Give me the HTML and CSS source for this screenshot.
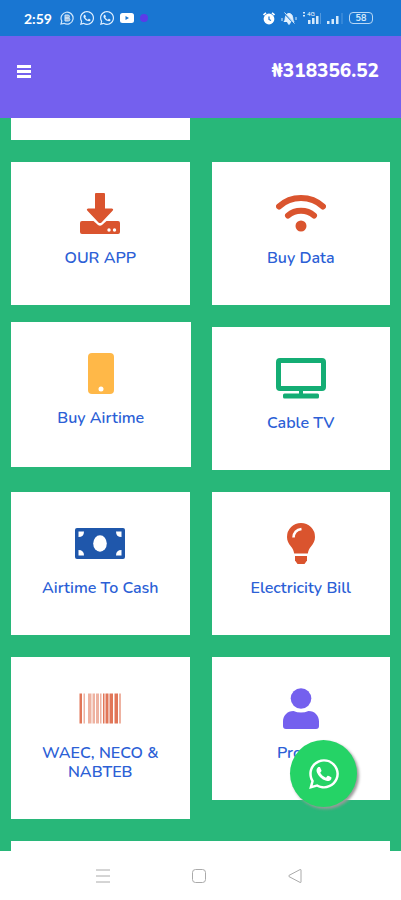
FILE: index.html
```html
<!DOCTYPE html>
<html lang="en">
<head>
    <meta charset="UTF-8">
    <meta name="viewport" content="width=device-width, initial-scale=1.0">
    <title>Dashboard</title>
    <link rel="stylesheet" href="styles.css">
</head>
<body>
    <svg class="defs" aria-hidden="true">
        <symbol id="whatsapp" viewBox="0 0 448 512">
            <path d="M380.9 97.1C339 55.1 283.2 32 223.9 32c-122.4 0-222 99.6-222 222 0 39.1 10.2 77.3 29.6 111L0 480l117.7-30.9c32.4 17.7 68.9 27 106.1 27h.1c122.3 0 224.1-99.6 224.1-222 0-59.3-25.2-115-67.1-157zm-157 341.6c-33.2 0-65.7-8.9-94-25.7l-6.7-4-69.8 18.3L72 359.2l-4.4-7c-18.5-29.4-28.2-63.3-28.2-98.2 0-101.7 82.8-184.5 184.6-184.5 49.3 0 95.6 19.2 130.4 54.1 34.8 34.9 56.2 81.2 56.1 130.5 0 101.8-84.9 184.6-186.6 184.6zm101.2-138.2c-5.5-2.8-32.8-16.2-37.9-18-5.1-1.9-8.8-2.8-12.5 2.8-3.7 5.6-14.3 18-17.6 21.8-3.2 3.7-6.5 4.2-12 1.4-32.6-16.3-54-29.1-75.5-66-5.7-9.8 5.7-9.1 16.3-30.3 1.8-3.7.9-6.9-.5-9.7-1.4-2.8-12.5-30.1-17.1-41.2-4.5-10.8-9.1-9.3-12.5-9.5-3.2-.2-6.9-.2-10.6-.2-3.7 0-9.7 1.4-14.8 6.9-5.1 5.6-19.4 19-19.4 46.3 0 27.3 19.9 53.7 22.6 57.4 2.8 3.7 39.1 59.7 94.8 83.8 35.2 15.2 49 16.5 66.6 13.9 10.7-1.6 32.8-13.4 37.4-26.4 4.6-13 4.6-24.1 3.2-26.4-1.3-2.5-5-3.9-10.5-6.6z"/>
        </symbol>
    </svg>

    <div class="statusbar">
        <div class="status-left">
            <span class="clock">2:59</span>
            <svg width="14" height="14" viewBox="0 0 14 14">
                <path d="M1 13l.8-3A6 6 0 1 1 4 12.3z" fill="none" stroke="#cfe6fb" stroke-width="1.2"/>
                <path d="M5 4h3a1.4 1.4 0 0 1 0 3H5zM5 7h3.400a1.500 1.500 0 0 1 0 3H5z" fill="#9fb9d6" stroke="#cfe6fb"/>
            </svg>
            <svg width="14" height="16" fill="#e2f1ff"><use href="#whatsapp"/></svg>
            <svg width="14" height="16" fill="#e2f1ff"><use href="#whatsapp"/></svg>
            <svg width="14" height="10" viewBox="0 0 14 10">
                <rect width="14" height="10" rx="2.500" fill="#fff"/>
                <path d="M5.500 3v4l3.500-2z" fill="#1976d2"/>
            </svg>
            <span class="dot"></span>
        </div>
        <div class="status-right">
            <svg width="12" height="13" viewBox="0 0 12 13">
                <path d="M.5 3L3 .8M11.500 3L9 .8" stroke="#fff" stroke-width="1.6"/>
                <circle cx="6" cy="7" r="5.400" fill="#fff"/>
                <path d="M6 4.500V7.500l2 1" fill="none" stroke="#1976d2" stroke-width="1.200"/>
            </svg>
            <svg width="16" height="13" viewBox="0 0 16 13">
                <path d="M3 9.500c1.500-1 1-3.500 1.500-5C5 2.500 6.500 1.500 8 1.500s3 1 3.500 3c.5 1.500 0 4 1.500 5zM6.500 10.500h3L8 12.500z" fill="#e2f1ff" stroke="#e2f1ff"/>
                <path d="M3 1l10.500 11" stroke="#1976d2" stroke-width="1.200"/>
                <path d="M1 6v3M15 5v3M3.500.5l10 11" stroke="#d5e9fb"/>
            </svg>
            <span class="network">
                <small>4G</small>
                <svg width="18" height="12" viewBox="0 0 18 12" fill="#d5e9fb">
                    <path d="M0 0h2v1.500H0zM0 3h2v1.500H0zM5 8h2.500v4H5zM9 6h2.500v6H9zM13 4h2.500v8H13z"/>
                    <path d="M17 1h1v11h-1z" opacity=".3"/>
                </svg>
            </span>
            <svg width="16" height="12" viewBox="0 0 16 12" fill="#d5e9fb">
                <path d="M0 9h2.500v3H0zM4.500 7H7v5H4.500zM9 4h2.500v8H9z"/>
                <path d="M14.500 1h1v11h-1z" opacity=".3"/>
            </svg>
            <span class="battery">58</span>
        </div>
    </div>

    <header class="topbar">
        <button class="menu" aria-label="Menu"><span></span><span></span><span></span></button>
        <span class="balance">₦318356.52</span>
    </header>

    <main class="content">
        <div class="grid">
            <div class="card card-scrolled"></div>

            <a href="#" class="card first">
                <svg class="icon orange" viewBox="0 0 50 42">
                    <path d="M21 0h8a1 1 0 0 1 1 1v14.500h7q2 .5.800 2L26.500 29.500q-1.500 1.200-3 0L12.200 17.500q-1.200-1.500.8-2h7V1a1 1 0 0 1 1-1z"/>
                    <path d="M7 28h11.500l4.500 4q2 1.600 4 0l4.500-4H43q2 0 2 2v9q0 2-2 2H7q-2 0-2-2v-9q0-2 2-2z"/>
                    <circle cx="34" cy="37" r="1.700" fill="#fff"/>
                    <circle cx="39.500" cy="37" r="1.700" fill="#fff"/>
                </svg>
                <span>OUR APP</span>
            </a>
            <a href="#" class="card">
                <svg class="icon orange-line" viewBox="0 0 50 42">
                    <path d="M3 13.500Q12 5 25 5t22 8.500M12 22.500q5.500-4.700 13-4.700T38 22.500"/>
                    <circle cx="25" cy="33" r="2.500"/>
                </svg>
                <span>Buy Data</span>
            </a>
            <a href="#" class="card raised">
                <svg class="icon amber" viewBox="0 0 50 42">
                    <rect x="12" width="26" height="41" rx="4"/>
                    <circle cx="25" cy="36" r="2.500" fill="#fff"/>
                </svg>
                <span>Buy Airtime</span>
            </a>
            <a href="#" class="card">
                <svg class="icon green" viewBox="0 0 50 42">
                    <path fill-rule="evenodd" d="M4 0h42q4 0 4 4v25q0 4-4 4H4q-4 0-4-4V4q0-4 4-4zm1 5v23h40V5z"/>
                    <path d="M23 32h4v4h-4z"/>
                    <rect x="7" y="35.500" width="36" height="5" rx="1.500"/>
                </svg>
                <span>Cable TV</span>
            </a>
            <a href="#" class="card">
                <svg class="icon navy" viewBox="0 0 50 42">
                    <rect y="5" width="50" height="31" rx="2"/>
                    <g fill="#fff">
                        <ellipse cx="25" cy="20.500" rx="6.800" ry="8.200"/>
                        <path d="M3.500 8.500H9q0 5.500-5.500 5.500zM46.500 8.500H41q0 5.500 5.500 5.500zM3.500 32.500H9q0-5.500-5.500-5.500zM46.500 32.500H41q0-5.500 5.500-5.500z"/>
                    </g>
                </svg>
                <span>Airtime To Cash</span>
            </a>
            <a href="#" class="card">
                <svg class="icon orange" viewBox="0 0 50 42">
                    <path d="M25 0a14 14 0 0 1 14 14c0 4-1.600 6.600-3.800 9.200-2 2.400-3 4.800-3.400 7.300H18.200c-.4-2.500-1.400-4.900-3.400-7.300C12.600 20.600 11 18 11 14A14 14 0 0 1 25 0z"/>
                    <path d="M19 33h12v4.500L28.500 41h-7L19 37.500z"/>
                    <path d="M17.500 14.500q.5-7.500 8-8.500" fill="none" stroke="#fff" stroke-width="2.600"/>
                </svg>
                <span>Electricity Bill</span>
            </a>
            <a href="#" class="card">
                <svg class="icon orange" viewBox="0 0 50 42">
                    <path d="M4.500 5.500h2.500v30H4.500zM28 5.500h1.500v30H28zM30.500 5.500h3v30h-3zM34.500 5.500h3.500v30h-3.500zM39.500 5.500h3.500v30h-3.500z" opacity=".8"/>
                    <path d="M8.500 5.500h1.500v30H8.500zM13 5.500h3.500v30H13zM17.500 5.500h2.500v30h-2.500zM21 5.500h3v30h-3zM25 5.500h1.500v30H25zM44 5.500h2v30h-2z" opacity=".45"/>
                </svg>
                <span>WAEC, NECO &amp; NABTEB</span>
            </a>
            <a href="#" class="card">
                <svg class="icon violet" viewBox="0 0 50 42">
                    <circle cx="25" cy="10.500" r="10.300"/>
                    <path d="M17.500 23q7.500 3 15 0C39 23 43 28 43 33.500V38q0 3-3 3H10q-3 0-3-3v-4.500C7 28 11 23 17.500 23z"/>
                </svg>
                <span>Profile</span>
            </a>
            <div class="card wide"></div>
        </div>
    </main>

    <nav class="navbar">
        <button aria-label="Recent apps">
            <svg width="16" height="16" viewBox="0 0 16 16"><path d="M1 2h14M1 8h14M1 14h14"/></svg>
        </button>
        <button aria-label="Home">
            <svg width="16" height="16" viewBox="0 0 16 16"><rect x="1.500" y="1.500" width="13" height="13" rx="3"/></svg>
        </button>
        <button aria-label="Back">
            <svg width="16" height="16" viewBox="0 0 16 16"><path d="M14 2v12q0 .8-1 .4L2 8.600q-.8-.6 0-1.200L13 1.600q1-.4 1 .4z"/></svg>
        </button>
    </nav>

    <a href="#" class="float" aria-label="WhatsApp">
        <svg width="30" height="34" fill="#fff"><use href="#whatsapp"/></svg>
    </a>
</body>
</html>
```
FILE: styles.css
```css
* {
    box-sizing: border-box;
}

body {
    margin: 0;
    height: 100vh;
    display: flex;
    flex-direction: column;
    position: relative;
    background: #28b779;
    font-family: Nunito, "Open Sans", sans-serif;
}

.defs {
    display: none;
}

button {
    padding: 0;
    border: none;
    background: none;
}

/* Phone status bar */
.statusbar {
    display: flex;
    justify-content: space-between;
    align-items: center;
    height: 36px;
    padding: 0 28px 0 24px;
    background: #1976d2;
    color: #fff;
}

.status-left,
.status-right {
    display: flex;
    align-items: center;
    gap: 6px;
}

.clock {
    margin-right: 2px;
    font-family: Lato, sans-serif;
    font-size: 14px;
    font-weight: bold;
}

.dot {
    width: 8px;
    height: 8px;
    border-radius: 50%;
    background: #5b3be8;
}

.network {
    position: relative;
    display: flex;
}

.network small {
    position: absolute;
    top: -2px;
    left: 4px;
    font-size: 6px;
    line-height: 8px;
}

.battery {
    width: 24px;
    height: 12px;
    border: 1px solid #b9d8f5;
    border-radius: 4px;
    color: #d5e9fb;
    font-size: 9px;
    font-weight: 700;
    line-height: 10px;
    text-align: center;
}

/* Header */
.topbar {
    display: flex;
    justify-content: space-between;
    align-items: flex-start;
    height: 82px;
    padding: 22px 22px 0 17px;
    background: #7460ee;
}

.menu {
    display: flex;
    flex-direction: column;
    gap: 2px;
    padding-top: 7px;
}

.menu span {
    width: 14px;
    height: 3px;
    background: #fff;
}

.balance {
    color: #fff;
    font-size: 19px;
    font-weight: 800;
    line-height: 26px;
}

/* Service cards */
.content {
    flex: 1;
    min-height: 0;
    overflow: hidden;
}

.grid {
    display: grid;
    grid-template-columns: 1fr 1fr;
    gap: 22px;
    align-items: start;
    padding: 0 11px;
}

.card {
    display: flex;
    flex-direction: column;
    align-items: center;
    gap: 14px;
    padding: 31px 24px 37px;
    background: #fff;
    color: #2c5fd6;
    font-size: 16px;
    font-weight: 600;
    line-height: 19px;
    text-align: center;
    text-decoration: none;
}

.card-scrolled {
    height: 22px;
    padding: 0;
}

.first {
    grid-column: 1;
}

.raised {
    margin: -5px -1px 0 0;
    padding-bottom: 39px;
}

.wide {
    grid-column: 1 / 3;
    height: 143px;
}

.icon {
    width: 50px;
    height: 42px;
}

.orange {
    fill: #da542e;
}

.orange-line {
    fill: #da542e;
    stroke: #da542e;
    stroke-width: 6;
    stroke-linecap: round;
}

.orange-line path {
    fill: none;
}

.amber {
    fill: #ffb848;
}

.green {
    fill: #14ad74;
}

.navy {
    fill: #1f57ab;
}

.violet {
    fill: #7460ee;
}

.float {
    position: absolute;
    right: 44px;
    bottom: 93px;
    display: flex;
    align-items: center;
    justify-content: center;
    width: 67px;
    height: 67px;
    border-radius: 50%;
    background: #25d366;
    box-shadow: 2px 2px 3px #999;
}

/* Phone navigation bar */
.navbar {
    display: flex;
    justify-content: center;
    align-items: center;
    gap: 80px;
    height: 49px;
    padding-right: 3px;
    background: #fff;
}

.navbar svg {
    display: block;
    fill: none;
    stroke: #aaa;
}
```
